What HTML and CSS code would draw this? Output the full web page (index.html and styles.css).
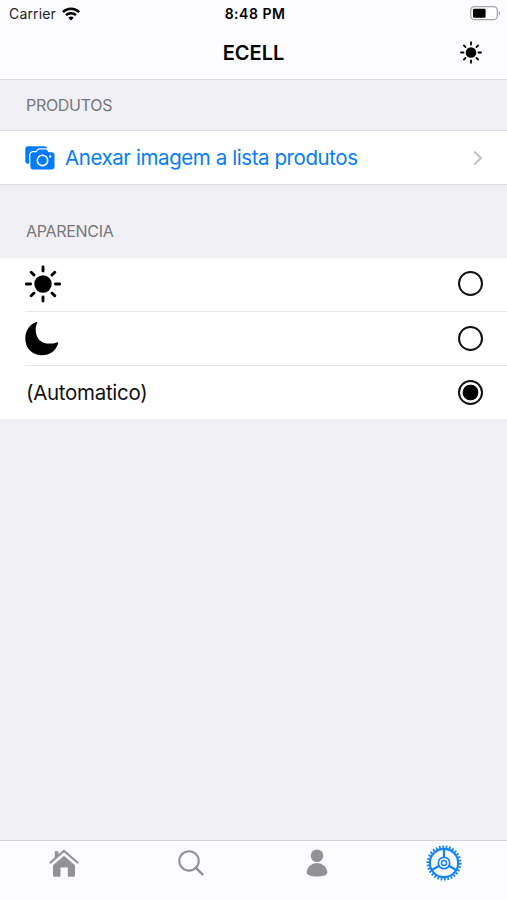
FILE: index.html
```html
<!DOCTYPE html>
<html lang="pt">
<head>
    <meta charset="UTF-8">
    <meta name="viewport" content="width=device-width, initial-scale=1.0">
    <title>ECELL</title>
    <link rel="stylesheet" href="styles.css">
</head>
<body>
    <svg class="defs">
        <symbol id="sun" viewBox="0 0 36 38">
            <circle cx="18" cy="19" r="8.7" fill="#000"/>
            <path d="M18 2v4M18 32v4M1.4 19h4.2M30.4 19h4.2M6.200 7.200l2.800 2.800M27 28l2.800 2.800M29.800 7.200L27 10M9 28l-2.800 2.800" stroke="#000" stroke-width="2.9" stroke-linecap="round"/>
        </symbol>
    </svg>
    <header>
        <div class="status-bar">
            <div class="carrier">
                <span>Carrier</span>
                <svg width="18" height="14" viewBox="0 0 18 14" fill="none" stroke="#000" stroke-width="2.5">
                    <path d="M.9 5.1a11.6 11.6 0 0 1 16.2 0M4 8.2a7.1 7.1 0 0 1 10 0"/>
                    <path d="M9 13.6l-2.7-2.8a3.8 3.8 0 0 1 5.4 0z" fill="#000" stroke="none"/>
                </svg>
            </div>
            <div class="time">8:48 PM</div>
            <svg class="battery" width="31" height="15" viewBox="0 0 31 15">
                <rect x=".7" y=".7" width="26.6" height="13" rx="3.8" fill="#fff" stroke="#a5a5a7" stroke-width="1.3"/>
                <rect x="3" y="2.8" width="12.6" height="9" rx="1.2" fill="#000"/>
                <path d="M28.8 5v4.6c1.9-.8 1.9-3.8 0-4.6z" fill="#a5a5a7"/>
            </svg>
        </div>
        <div class="nav-bar">
            <h1>ECELL</h1>
            <svg class="nav-sun" width="22" height="23"><use href="#sun"/></svg>
        </div>
    </header>
    <main>
        <h2>PRODUTOS</h2>
        <div class="list">
            <a class="row link">
                <svg class="camera" width="30" height="24" viewBox="0 0 30 24">
                    <rect x=".3" y=".3" width="21.700" height="17.400" rx="2.700" fill="#007aff"/>
                    <path d="M8.200 6.300h3.200l1.500-2c.5-.7 1-.9 1.800-.9h5.600c.8 0 1.300.2 1.800.9l1.500 2h2.900c1.900 0 3 1 3 2.900v11.300c0 1.900-1.100 2.900-3 2.900H8.200c-1.900 0-2.800-1-2.800-2.900V9.200c0-1.900.9-2.900 2.800-2.900z" fill="#007aff" stroke="#fff" stroke-width="2.400" paint-order="stroke"/>
                    <circle cx="17.500" cy="14.400" r="5.200" fill="none" stroke="#fff" stroke-width="1.600"/>
                    <circle cx="25.200" cy="10.400" r="1.200" fill="#fff"/>
                </svg>
                <span class="link-text">Anexar imagem a lista produtos</span>
                <svg class="chevron" width="10" height="16" viewBox="0 0 10 16">
                    <path d="M1.200 1.500L8 8l-6.800 6.500" fill="none" stroke="#c4c4c7" stroke-width="2.100"/>
                </svg>
            </a>
        </div>
        <h2 class="second">APARENCIA</h2>
        <div class="list options">
            <div class="row">
                <svg width="36" height="38"><use href="#sun"/></svg>
                <span class="radio"></span>
            </div>
            <div class="row">
                <svg width="34" height="35" viewBox="0 0 34 35">
                    <path d="M11.300 1c.8-.3 1.400.3 1 1.100-1.100 2-1.600 4.200-1.600 6.600 0 8.500 5.300 13.900 13.800 13.900 2.800 0 5.300-.4 7.400-1.200.9-.3 1.600.2 1.300 1.100C30.800 29.800 24.700 34.300 17 34.300 7.200 34.300.3 27.400.3 17.500.3 9.900 4.500 3.500 11.300 1z" fill="#000"/>
                </svg>
                <span class="radio"></span>
            </div>
            <div class="row">
                <span class="auto">(Automatico)</span>
                <span class="radio checked"></span>
            </div>
        </div>
    </main>
    <nav class="tab-bar">
        <a>
            <svg width="30" height="28" viewBox="0 0 30 28" fill="#929294">
                <path d="M5.800 9.400V2.200h3.700v3.800z"/>
                <path d="M1.500 13.500L15 1.900l13.500 11.600" fill="none" stroke="#929294" stroke-width="2.200" stroke-linecap="round"/>
                <path d="M15 6.800l11 9.400v10.100c0 1-.5 1.500-1.500 1.500h-5.700v-9.200h-7.300v9.200H5.500c-1 0-1.500-.5-1.500-1.500V16.200z"/>
            </svg>
        </a>
        <a>
            <svg width="26" height="26" viewBox="0 0 26 26" fill="none" stroke="#929294">
                <circle cx="11" cy="10.900" r="9.700" stroke-width="2.100"/>
                <path d="M17.900 17.900l6.600 6.400" stroke-width="2.500" stroke-linecap="round"/>
            </svg>
        </a>
        <a>
            <svg width="22" height="28" viewBox="0 0 22 28" fill="#929294">
                <circle cx="11" cy="6.700" r="6.300"/>
                <path d="M11 13.900c5.400 0 10.300 4.400 10.300 9.700 0 2.900-4.500 4-10.300 4S.7 26.500.7 23.600c0-5.300 4.900-9.700 10.300-9.700z"/>
            </svg>
        </a>
        <a>
            <svg width="36" height="36" viewBox="0 0 36 36" fill="none" stroke="#1683f5">
                <circle cx="18" cy="18" r="14.200" stroke-width="2.200"/>
                <circle cx="18" cy="18" r="16.200" stroke-width="2.600" pathLength="60" stroke-dasharray="1 1"/>
                <circle cx="18" cy="18" r="5.700" stroke-width="1.700"/>
                <circle cx="18" cy="18" r="2.500" stroke-width="1.500"/>
                <path d="M18 4v8.500M13.200 20.800L5.900 25M22.800 20.800l7.300 4.200" stroke-width="2.200"/>
            </svg>
        </a>
    </nav>
</body>
</html>
```
FILE: styles.css
```css
* {
    box-sizing: border-box;
}
body {
    font-family: Inter, "Liberation Sans", sans-serif;
    background-color: #efeff4;
    color: #000;
    margin: 0;
    height: 100vh;
    display: flex;
    flex-direction: column;
}
svg {
    display: block;
    flex-shrink: 0;
}
.defs {
    position: absolute;
    width: 0;
    height: 0;
}
header {
    height: 80px;
    background-color: #fcfcfe;
    border-bottom: 1px solid #dadade;
}
.status-bar {
    display: grid;
    grid-template-columns: 1fr auto 1fr;
    align-items: center;
    height: 27px;
    padding: 0 6px 0 9px;
}
.carrier {
    display: flex;
    align-items: center;
    gap: 6px;
    font-size: 14px;
    letter-spacing: 0.15px;
    color: #222;
}
.time {
    font-size: 14px;
    font-weight: 600;
    letter-spacing: 0.5px;
}
.battery {
    justify-self: end;
}
.nav-bar {
    display: grid;
    grid-template-columns: 1fr auto 1fr;
    align-items: center;
    height: 51px;
    padding-right: 25px;
    padding-left: 25px;
}
h1 {
    grid-column: 2;
    margin: 0;
    font-size: 20px;
    font-weight: 600;
}
.nav-sun {
    justify-self: end;
}
main {
    flex: 1;
}
h2 {
    margin: 0;
    height: 50px;
    padding: 0 26px;
    font-size: 16px;
    font-weight: 400;
    line-height: 50px;
    letter-spacing: -0.3px;
    color: #77777b;
}
.second {
    height: 72px;
    line-height: 92px;
}
.list {
    background-color: #fff;
    border-top: 1px solid #dedee2;
    border-bottom: 1px solid #dedee2;
}
.row {
    display: flex;
    align-items: center;
    height: 53px;
    padding-right: 24px;
    margin-left: 25px;
}
.link {
    color: #087cf5;
}
.link-text {
    margin-left: 10px;
    font-size: 20.5px;
    letter-spacing: -0.42px;
    white-space: nowrap;
}
.chevron {
    margin-left: auto;
}
.options {
    border-top-color: #eeeef2;
    border-bottom: none;
}
.options .row:first-child {
    padding-bottom: 2px;
}
.options .row + .row {
    height: 54px;
    border-top: 1px solid #e6e6e9;
}
.auto {
    padding-left: 1px;
    font-size: 20.5px;
    letter-spacing: -0.3px;
    color: #111;
}
.radio {
    width: 25px;
    height: 25px;
    margin-left: auto;
    border: 2px solid #111;
    border-radius: 50%;
}
.checked {
    background: radial-gradient(circle, #000 7.5px, transparent 8.2px);
}
.tab-bar {
    display: grid;
    grid-template-columns: repeat(4, 1fr);
    height: 60px;
    background-color: #fcfcfe;
    border-top: 1px solid #d4d4d8;
}
.tab-bar a {
    display: flex;
    align-items: center;
    justify-content: center;
    height: 44px;
    padding-left: 1px;
}
```
